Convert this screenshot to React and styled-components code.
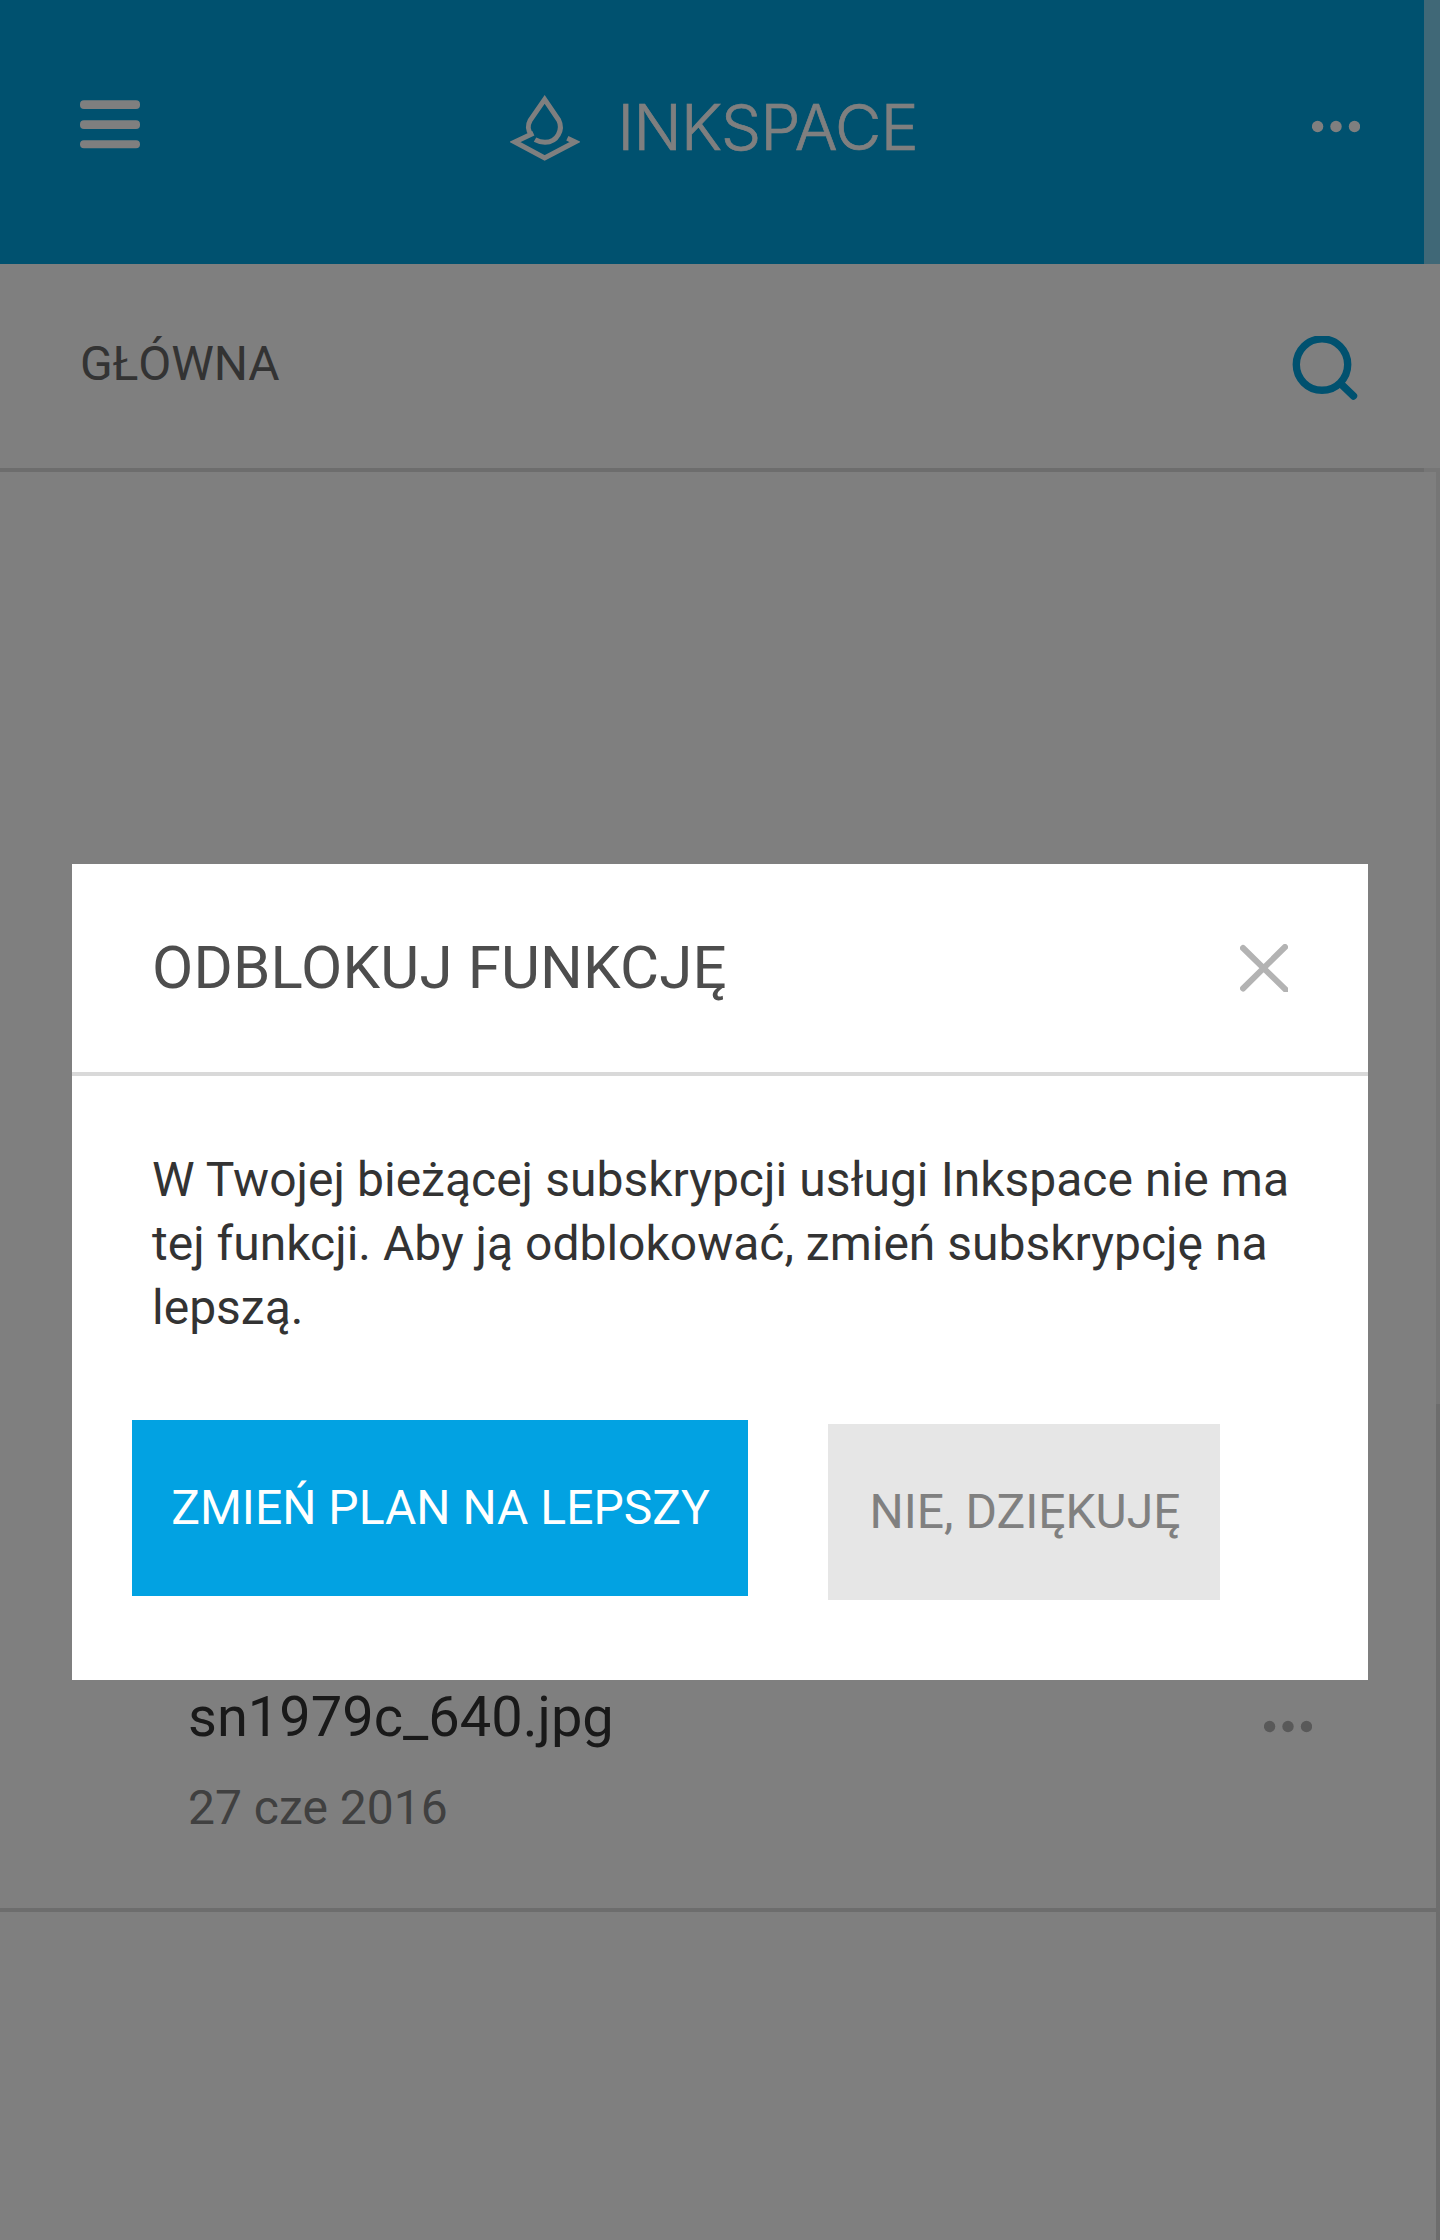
import React from "react";
import styled, { createGlobalStyle } from "styled-components";

const GlobalStyle = createGlobalStyle`
  * { box-sizing: border-box; }
  body {
    margin: 0;
    background: #fff;
    font-family: Roboto, "Liberation Sans", sans-serif;
    overflow: hidden;
  }
`;

const Page = styled.div`
  position: relative;
  display: flex;
  flex-direction: column;
  width: 1440px;
  height: 2240px;
  overflow: hidden;
  background: #fff;
`;

const TopBar = styled.header`
  display: grid;
  grid-template-columns: 1fr auto 1fr;
  align-items: start;
  height: 264px;
  padding: 94px 80px 0;
  background: #00a3df;
`;

const IconButton = styled.button`
  display: flex;
  justify-self: ${(p) => p.$side || "start"};
  margin: ${(p) => p.$top || 0}px 0 0;
  padding: 0;
  border: 0;
  background: none;
`;

const Brand = styled.div`
  display: flex;
  align-items: flex-start;
  width: 420px;
`;

const BrandName = styled.span`
  margin: -4px 0 0 37.5px;
  color: #fff;
  font-family: Inter, "Liberation Sans", sans-serif;
  font-weight: 300;
  font-size: 63.6px;
  line-height: 74px;
  letter-spacing: -0.75px;
  white-space: nowrap;
  -webkit-text-stroke: 0.7px #fff;
`;

const SectionBar = styled.div`
  display: flex;
  justify-content: space-between;
  align-items: flex-start;
  height: 208px;
  padding: 68px 80px 0;
  border-bottom: 4px solid #dadada;
`;

const SectionTitle = styled.h1`
  margin: 0;
  color: #666;
  font-weight: 400;
  font-size: 48px;
  line-height: 64px;
  letter-spacing: -0.1px;
`;

const FileArea = styled.main`
  flex: 1;
  border-right: 4px solid #dadada;
`;

const FileRow = styled.div`
  display: flex;
  justify-content: space-between;
  align-items: flex-start;
  height: 1440px;
  padding: 1213px 124px 0 188px;
  border-bottom: 4px solid #dadada;
`;

const FileInfo = styled.div`
  display: flex;
  flex-direction: column;
  gap: 27px;
`;

const FileName = styled.span`
  color: #333;
  font-size: 56px;
  line-height: 64px;
`;

const FileDate = styled.span`
  color: #808080;
  font-size: 48px;
  line-height: 64px;
`;

const ScrollThumb = styled.div`
  position: absolute;
  top: 0;
  right: 0;
  width: 16px;
  height: 1404px;
  background: rgba(255, 255, 255, 0.5);
`;

const Backdrop = styled.div`
  position: absolute;
  inset: 0;
  display: flex;
  justify-content: center;
  align-items: flex-start;
  padding-top: 864px;
  background: rgba(0, 0, 0, 0.5);
`;

const Dialog = styled.section`
  width: 1296px;
  height: 816px;
  background: #fff;
`;

const DialogHeader = styled.div`
  display: flex;
  justify-content: space-between;
  align-items: center;
  height: 212px;
  padding: 0 80px;
  border-bottom: 4px solid #d9d9d9;
`;

const DialogTitle = styled.h2`
  margin: 0;
  color: #4d4d4d;
  font-weight: 400;
  font-size: 60px;
  line-height: 80px;
  letter-spacing: 0.16px;
`;

const DialogText = styled.p`
  margin: 0;
  padding: 72px 76px 80px 80px;
  color: #333;
  font-size: 48px;
  line-height: 64px;

  &::first-line {
    word-spacing: 0.2px;
  }
`;

const Actions = styled.div`
  display: flex;
  align-items: flex-start;
  gap: 80px;
  padding-left: 60px;
`;

const ActionButton = styled.button`
  width: ${(p) => (p.$primary ? 616 : 392)}px;
  height: 176px;
  margin: ${(p) => (p.$primary ? 0 : 4)}px 0 0;
  padding: 0 0 0 ${(p) => (p.$primary ? 1 : 2)}px;
  border: 0;
  background: ${(p) => (p.$primary ? "#02a2e2" : "#e6e6e6")};
  color: ${(p) => (p.$primary ? "#fff" : "#808080")};
  font-family: inherit;
  font-size: 48px;
  line-height: 64px;
  white-space: nowrap;
`;

const MenuIcon = () => (
  <svg width="60" height="49" viewBox="0 0 60 49" fill="#fff">
    <rect y="0.3" width="60" height="8.6" rx="4" />
    <rect y="20.3" width="60" height="8.6" rx="4" />
    <rect y="40.3" width="60" height="7.9" rx="3.9" />
  </svg>
);

const DotsIcon = ({ color }) => (
  <svg width="48" height="13" viewBox="0 0 48 13" fill={color}>
    <circle cx="5.6" cy="6.5" r="5.7" />
    <circle cx="24" cy="6.5" r="5.7" />
    <circle cx="42.5" cy="6.5" r="5.7" />
  </svg>
);

const LogoIcon = () => (
  <svg width="70" height="70" viewBox="90 72 210 210" fill="none" stroke="#fff" strokeWidth="15">
    <path d="M154 195 C143 181 143 164 150 152 L194 88 L236 150 C250 178 233 217 195 217 C184 217 174 214 165 209" />
    <path d="M160 190 L105 216 L194 264 L285 216 L262 205" />
  </svg>
);

const SearchIcon = () => (
  <svg width="68" height="66" viewBox="0 0 68 66" fill="none" stroke="#00a3df" strokeWidth="7.4">
    <circle cx="30" cy="28.6" r="25.7" />
    <path d="M48.5 47.5 L61.5 60" strokeLinecap="round" />
  </svg>
);

const CloseIcon = () => (
  <svg width="48" height="48" viewBox="0 0 48 48" stroke="#b3b3b3" strokeWidth="6" strokeLinecap="round">
    <path d="M3 4 L46 46 M45 3 L3 44.5" />
  </svg>
);

export default function App() {
  return (
    <>
      <GlobalStyle />
      <Page>
        <TopBar>
          <IconButton $top={6} aria-label="Menu">
            <MenuIcon />
          </IconButton>
          <Brand>
            <LogoIcon />
            <BrandName>INKSPACE</BrandName>
          </Brand>
          <IconButton $side="end" $top={26} aria-label="Więcej">
            <DotsIcon color="#fff" />
          </IconButton>
        </TopBar>
        <SectionBar>
          <SectionTitle>GŁÓWNA</SectionTitle>
          <IconButton $top={4} aria-label="Szukaj">
            <SearchIcon />
          </IconButton>
        </SectionBar>
        <FileArea>
          <FileRow>
            <FileInfo>
              <FileName>sn1979c_640.jpg</FileName>
              <FileDate>27 cze 2016</FileDate>
            </FileInfo>
            <IconButton $top={35} aria-label="Opcje pliku">
              <DotsIcon color="#b3b3b3" />
            </IconButton>
          </FileRow>
        </FileArea>
        <ScrollThumb />
        <Backdrop>
          <Dialog role="dialog">
            <DialogHeader>
              <DialogTitle>ODBLOKUJ FUNKCJĘ</DialogTitle>
              <IconButton aria-label="Zamknij">
                <CloseIcon />
              </IconButton>
            </DialogHeader>
            <DialogText>
              W Twojej bieżącej subskrypcji usługi Inkspace nie ma tej funkcji. Aby ją odblokować,
              zmień subskrypcję na lepszą.
            </DialogText>
            <Actions>
              <ActionButton $primary>ZMIEŃ PLAN NA LEPSZY</ActionButton>
              <ActionButton>NIE, DZIĘKUJĘ</ActionButton>
            </Actions>
          </Dialog>
        </Backdrop>
      </Page>
    </>
  );
}
